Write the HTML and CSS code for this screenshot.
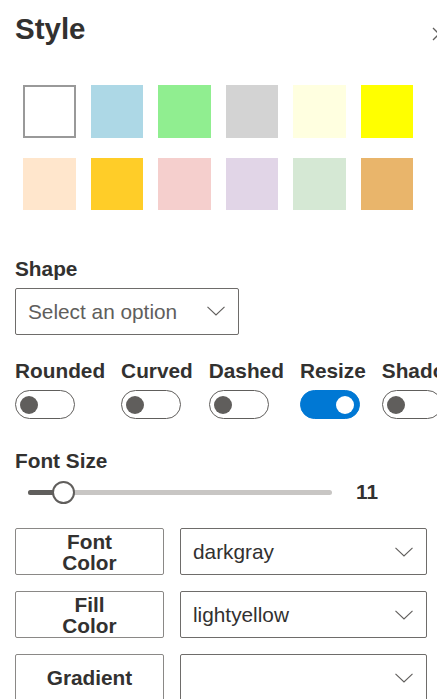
FILE: index.html
```html
<!DOCTYPE html>
<html>
<head>
<meta charset="utf-8">
<link rel="stylesheet" href="styles.css">
</head>
<body>
<div class="panel">
  <div class="header">
    <h1 class="title">Style</h1>
    <svg class="close" width="14" height="14" viewBox="0 0 14 14"><path d="M1 1 L13 13 M13 1 L1 13" stroke="#605e5c" stroke-width="1.3" fill="none"/></svg>
  </div>

  <div class="swatches">
    <div class="swatch sw-white"></div>
    <div class="swatch sw-lightblue"></div>
    <div class="swatch sw-lightgreen"></div>
    <div class="swatch sw-lightgray"></div>
    <div class="swatch sw-lightyellow"></div>
    <div class="swatch sw-yellow"></div>
    <div class="swatch sw-peach"></div>
    <div class="swatch sw-amber"></div>
    <div class="swatch sw-pink"></div>
    <div class="swatch sw-lavender"></div>
    <div class="swatch sw-mint"></div>
    <div class="swatch sw-tan"></div>
  </div>

  <div class="label label-shape">Shape</div>
  <div class="dropdown dropdown-shape">
    <span class="placeholder">Select an option</span>
    <svg class="chev" width="18" height="10" viewBox="0 0 18 10"><path d="M0.5 0.8 L9 9 L17.5 0.8" stroke="#605e5c" stroke-width="1.1" fill="none"/></svg>
  </div>

  <div class="toggles">
    <div class="tgl-item"><div class="label">Rounded</div><div class="toggle"><span class="knob"></span></div></div>
    <div class="tgl-item"><div class="label">Curved</div><div class="toggle"><span class="knob"></span></div></div>
    <div class="tgl-item"><div class="label">Dashed</div><div class="toggle"><span class="knob"></span></div></div>
    <div class="tgl-item"><div class="label">Resize</div><div class="toggle on"><span class="knob"></span></div></div>
    <div class="tgl-item"><div class="label">Shadow</div><div class="toggle"><span class="knob"></span></div></div>
  </div>

  <div class="label label-font">Font Size</div>
  <div class="slider-row">
    <div class="track">
      <div class="fill"></div>
      <div class="thumb"></div>
    </div>
    <div class="value">11</div>
  </div>

  <div class="rows">
    <div class="btn">Font<br>Color</div>
    <div class="dropdown">
      <span class="val">darkgray</span>
      <svg class="chev" width="18" height="10" viewBox="0 0 18 10"><path d="M0.5 0.8 L9 9 L17.5 0.8" stroke="#605e5c" stroke-width="1.1" fill="none"/></svg>
    </div>
    <div class="btn">Fill<br>Color</div>
    <div class="dropdown">
      <span class="val">lightyellow</span>
      <svg class="chev" width="18" height="10" viewBox="0 0 18 10"><path d="M0.5 0.8 L9 9 L17.5 0.8" stroke="#605e5c" stroke-width="1.1" fill="none"/></svg>
    </div>
    <div class="btn">Gradient</div>
    <div class="dropdown">
      <span class="val"></span>
      <svg class="chev" width="18" height="10" viewBox="0 0 18 10"><path d="M0.5 0.8 L9 9 L17.5 0.8" stroke="#605e5c" stroke-width="1.1" fill="none"/></svg>
    </div>
  </div>
</div>
</body>
</html>
```

FILE: styles.css
```css
html, body {
  margin: 0;
  padding: 0;
  background: #ffffff;
  overflow: hidden;
}
body {
  font-family: "Liberation Sans", Arial, sans-serif;
  color: #323130;
}
.panel {
  width: 445px;
  padding: 12px 0 0 15px;
}
.header {
  display: flex;
  align-items: flex-start;
  justify-content: space-between;
  padding-right: 12px;
  width: 431px;
}
.title {
  margin: 0;
  font-size: 29.5px;
  line-height: 34px;
  font-weight: bold;
  color: #323130;
}
.close {
  margin-top: 15px;
  flex: none;
}
.swatches {
  display: grid;
  grid-template-columns: repeat(6, 52.5px);
  grid-auto-rows: 52.5px;
  column-gap: 15px;
  row-gap: 20px;
  margin: 39px 0 0 8px;
}
.swatch { box-sizing: border-box; }
.sw-white { background: #ffffff; border: 2px solid #999999; }
.sw-lightblue { background: #add8e6; }
.sw-lightgreen { background: #90ee90; }
.sw-lightgray { background: #d3d3d3; }
.sw-lightyellow { background: #ffffe0; }
.sw-yellow { background: #ffff00; }
.sw-peach { background: #ffe6cc; }
.sw-amber { background: #ffcd28; }
.sw-pink { background: #f5cfcd; }
.sw-lavender { background: #e1d5e7; }
.sw-mint { background: #d5e8d4; }
.sw-tan { background: #e9b56b; }

.label {
  font-size: 20.8px;
  line-height: 24px;
  font-weight: bold;
  color: #323130;
  white-space: nowrap;
}
.label-shape { margin-top: 47px; }
.dropdown {
  box-sizing: border-box;
  height: 47px;
  border: 1px solid #6e6c6a;
  border-radius: 2px;
  display: flex;
  align-items: center;
  justify-content: space-between;
  padding: 0 13px 0 12px;
  font-size: 20.8px;
}
.dropdown-shape {
  width: 224px;
  margin-top: 7px;
}
.dropdown-shape .chev { margin-top: -2px; }
.placeholder { color: #605e5c; }
.val { color: #323130; }
.chev { flex: none; }

.toggles {
  display: flex;
  gap: 16px;
  margin-top: 24px;
}
.tgl-item {
  display: flex;
  flex-direction: column;
  gap: 7px;
  flex: none;
}
.toggle {
  box-sizing: border-box;
  width: 60px;
  height: 29px;
  border: 1px solid #605e5c;
  border-radius: 15px;
  display: flex;
  align-items: center;
  padding: 0 5px 0 4px;
}
.knob {
  width: 18px;
  height: 18px;
  border-radius: 50%;
  background: #605e5c;
}
.toggle.on {
  background: #0078d4;
  border-color: #0078d4;
  justify-content: flex-end;
}
.toggle.on .knob { background: #ffffff; }

.label-font { margin-top: 30px; }
.slider-row {
  display: flex;
  align-items: center;
  height: 24px;
  margin-top: 7px;
  padding-left: 13px;
}
.track {
  position: relative;
  width: 304px;
  height: 5px;
  border-radius: 3px;
  background: #c8c6c4;
}
.fill {
  width: 36px;
  height: 5px;
  border-radius: 3px;
  background: #605e5c;
}
.thumb {
  position: absolute;
  left: 24px;
  top: -9px;
  box-sizing: border-box;
  width: 23px;
  height: 23px;
  border-radius: 50%;
  border: 2px solid #605e5c;
  background: #ffffff;
}
.value {
  margin-left: 24px;
  font-size: 20.8px;
  font-weight: bold;
  color: #323130;
}

.rows {
  display: grid;
  grid-template-columns: 149px 247px;
  grid-auto-rows: 47px;
  column-gap: 16px;
  row-gap: 16px;
  margin-top: 24px;
}
.btn {
  box-sizing: border-box;
  border: 1px solid #8a8886;
  border-radius: 2px;
  display: flex;
  align-items: center;
  justify-content: center;
  text-align: center;
  font-size: 20.8px;
  line-height: 21px;
  font-weight: bold;
  color: #323130;
}
```
